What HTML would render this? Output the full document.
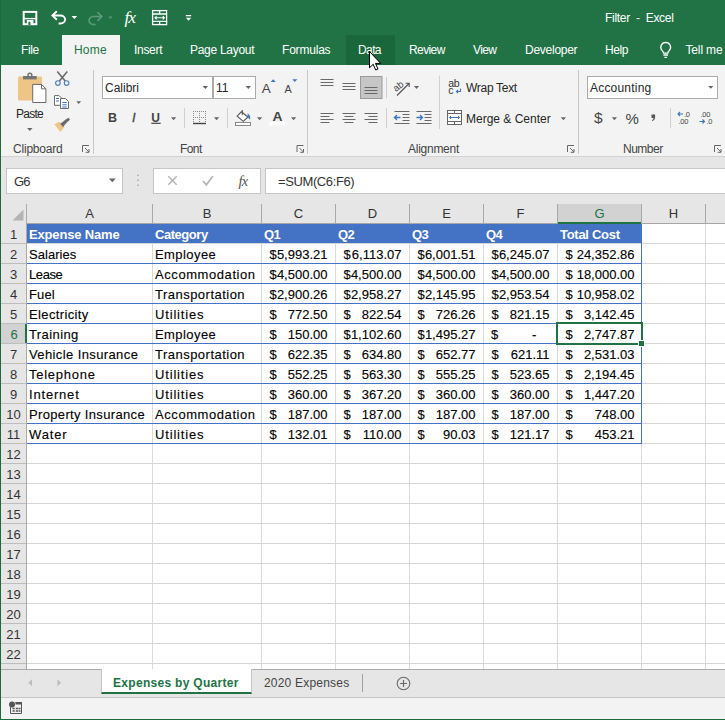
<!DOCTYPE html>
<html lang="en">
<head>
<meta charset="utf-8">
<title>Filter - Excel</title>
<style>
*{box-sizing:border-box;margin:0;padding:0}
html,body{width:725px;height:720px;overflow:hidden;background:#e6e6e6;font-family:"Liberation Sans",sans-serif;font-size:12px;color:#262626}
#app{position:absolute;left:0;top:0;width:725px;height:720px;overflow:hidden;background:#e6e6e6}
.abs{position:absolute}
#titlebar{position:absolute;left:0;top:0;width:725px;height:65px;background:#217346}
#title{position:absolute;left:605px;top:11px;color:#fff;font-size:12px;white-space:pre}
.tab{position:absolute;top:43px;color:#fff;font-size:12px;white-space:nowrap}
#hometab{position:absolute;left:62px;top:35px;width:58px;height:31px;background:#f3f3f3}
#datahover{position:absolute;left:346px;top:35px;width:49px;height:30px;background:#19673a}
#ribbon{position:absolute;left:0;top:65px;width:725px;height:92px;background:#f3f3f3;border-bottom:1px solid #d2d2d2}
.sep{position:absolute;top:5px;width:1px;height:84px;background:#c8c8c8}
.glabel{position:absolute;top:77px;font-size:12px;color:#444;white-space:nowrap}
.rt{position:absolute;font-size:12px;color:#262626;white-space:nowrap}
.combo{position:absolute;top:11px;height:23px;background:#fff;border:1px solid #ababab;font-size:12px;line-height:20px;padding:1px 0 0 2px;white-space:nowrap}
.dd{position:absolute;width:0;height:0;border-left:3px solid transparent;border-right:3px solid transparent;border-top:3px solid #666}
svg{position:absolute;overflow:visible}
#leftedge{position:absolute;left:0;top:0;width:1px;height:720px;background:#1a6b3c}
#fbar{position:absolute;left:0;top:158px;width:725px;height:46px;background:#e6e6e6}
#namebox{position:absolute;left:6px;top:168px;width:117px;height:26px;background:#fff;border:1px solid #c6c6c6;font-size:13px;line-height:26px;padding-left:7px;color:#333;letter-spacing:-.8px}
#fxbox{position:absolute;left:153px;top:168px;width:108px;height:26px;background:#fff;border:1px solid #c6c6c6}
#formula{position:absolute;left:265px;top:168px;width:470px;height:26px;background:#fff;border:1px solid #c6c6c6;font-size:13px;line-height:26px;padding-left:12px;color:#333}
#grid{position:absolute;left:0;top:0;width:725px;height:669px;overflow:hidden;pointer-events:none}
#gridbg{position:absolute;left:1px;top:204px;width:724px;height:465px;background:#fff}
#hdrbg{position:absolute;left:1px;top:204px;width:724px;height:20px;background:#e6e6e6;border-bottom:1px solid #a6a6a6}
#rhbg{position:absolute;left:1px;top:204px;width:26px;height:465px;background:#e6e6e6;border-right:1px solid #aaa}
.ch{position:absolute;top:204px;height:19px;line-height:20px;text-align:center;font-size:13px;color:#333;border-right:0}
.ch.sel{background:#d2d2d2;color:#217346;border-bottom:2px solid #217346;height:20px}
.rh{position:absolute;left:1px;width:25px;height:19px;line-height:21px;text-align:center;font-size:13px;color:#333}
.rh.sel{background:#d2d2d2;color:#217346;border-right:2px solid #217346;width:26px;padding-left:2px}
.vl{position:absolute;top:224px;width:1px;height:445px;background:#d9d9d9}
.hl{position:absolute;left:27px;width:698px;height:1px;background:#d6d6d6}
.rl{position:absolute;left:1px;width:25px;height:1px;background:#bdbdbd}
.hs{position:absolute;top:204px;width:1px;height:19px;background:#a8a8a8}
.thead{position:absolute;background:#4472c4}
.th{position:absolute;height:19px;line-height:22px;font-size:13px;font-weight:bold;color:#fff;white-space:nowrap;letter-spacing:.2px}
.tc{position:absolute;height:19px;line-height:22px;font-size:13px;color:#000;white-space:nowrap;-webkit-text-stroke:.12px #000}
.tc.num{text-align:right}
.bl{position:absolute;left:27px;width:615px;height:1px;background:#4472c4}
.bv{position:absolute;width:1px;background:#4472c4}
#selbox{position:absolute;left:556px;top:322px;width:87px;height:23px;border:2px solid #217346}
#selh{position:absolute;left:638px;top:340px;width:7px;height:7px;background:#217346;border:1px solid #fff}
#tabs{position:absolute;left:0;top:669px;width:725px;height:28px;background:#e6e6e6;border-top:1px solid #ababab}
#status{position:absolute;left:0;top:697px;width:725px;height:23px;background:#f3f3f3;border-top:1px solid #c6c6c6}
#botedge{position:absolute;left:0;top:719px;width:725px;height:1px;background:#1a6b3c}
</style>
</head>
<body>
<div id="app">
<div id="titlebar">
  <div id="title" style="letter-spacing:-.3px">Filter  -  Excel</div>
  <div id="datahover"></div>
  <div id="hometab"></div>
  <div class="tab" style="left:21px;letter-spacing:-.4px">File</div>
  <div class="tab" style="left:74px;color:#217346;letter-spacing:.2px">Home</div>
  <div class="tab" style="left:134px;letter-spacing:-.3px">Insert</div>
  <div class="tab" style="left:190px;letter-spacing:-.28px">Page Layout</div>
  <div class="tab" style="left:282px;letter-spacing:-.2px">Formulas</div>
  <div class="tab" style="left:358px;letter-spacing:-.6px">Data</div>
  <div class="tab" style="left:409px;letter-spacing:-.6px">Review</div>
  <div class="tab" style="left:473px;letter-spacing:-.6px">View</div>
  <div class="tab" style="left:525px;letter-spacing:-.26px">Developer</div>
  <div class="tab" style="left:605px;letter-spacing:-.4px">Help</div>
  <div class="tab" style="left:685.500px;letter-spacing:-.15px">Tell me</div>
</div>
<div id="ribbon">
  <div class="sep" style="left:93px"></div>
  <div class="sep" style="left:307px"></div>
  <div class="sep" style="left:578px"></div>
  <div class="rt" style="left:16px;top:42px;letter-spacing:-.75px">Paste</div>
  <div class="glabel" style="left:13px;letter-spacing:-.2px">Clipboard</div>
  <div class="glabel" style="left:180px;letter-spacing:-.6px">Font</div>
  <div class="glabel" style="left:408px;letter-spacing:-.26px">Alignment</div>
  <div class="glabel" style="left:623px;letter-spacing:-.5px">Number</div>
  <div class="combo" style="left:102px;width:111px">Calibri</div>
  <div class="combo" style="left:213px;width:43px">11</div>
  <div class="combo" style="left:587px;width:131px;letter-spacing:.2px">Accounting</div>
  <div class="rt" style="left:466px;top:16px;letter-spacing:-.3px">Wrap Text</div>
  <div class="rt" style="left:466px;top:47px">Merge &amp; Center</div>
</div>
<div id="fbar"></div>
<div id="namebox">G6</div>
<div id="fxbox"></div>
<div id="formula" style="letter-spacing:-.39px">=SUM(C6:F6)</div>
<div id="gridbg"></div><div id="hdrbg"></div><div id="rhbg"></div>

<div id="grid">
<div class="ch" style="left:27px;width:125px">A</div>
<div class="ch" style="left:153px;width:108px">B</div>
<div class="ch" style="left:262px;width:73px">C</div>
<div class="ch" style="left:336px;width:73px">D</div>
<div class="ch" style="left:410px;width:73px">E</div>
<div class="ch" style="left:484px;width:73px">F</div>
<div class="ch sel" style="left:558px;width:83px">G</div>
<div class="ch" style="left:642px;width:63px">H</div>
<div class="ch" style="left:706px;width:63px"></div>
<div class="vl" style="left:152px"></div><div class="hs" style="left:152px"></div>
<div class="vl" style="left:261px"></div><div class="hs" style="left:261px"></div>
<div class="vl" style="left:335px"></div><div class="hs" style="left:335px"></div>
<div class="vl" style="left:409px"></div><div class="hs" style="left:409px"></div>
<div class="vl" style="left:483px"></div><div class="hs" style="left:483px"></div>
<div class="vl" style="left:557px"></div><div class="hs" style="left:557px"></div>
<div class="vl" style="left:641px"></div><div class="hs" style="left:641px"></div>
<div class="vl" style="left:705px"></div><div class="hs" style="left:705px"></div>
<div class="vl" style="left:769px"></div><div class="hs" style="left:769px"></div>
<div class="rh" style="top:224px">1</div>
<div class="hl" style="top:243px"></div><div class="rl" style="top:243px"></div>
<div class="rh" style="top:244px">2</div>
<div class="hl" style="top:263px"></div><div class="rl" style="top:263px"></div>
<div class="rh" style="top:264px">3</div>
<div class="hl" style="top:283px"></div><div class="rl" style="top:283px"></div>
<div class="rh" style="top:284px">4</div>
<div class="hl" style="top:303px"></div><div class="rl" style="top:303px"></div>
<div class="rh" style="top:304px">5</div>
<div class="hl" style="top:323px"></div><div class="rl" style="top:323px"></div>
<div class="rh sel" style="top:324px">6</div>
<div class="hl" style="top:343px"></div><div class="rl" style="top:343px"></div>
<div class="rh" style="top:344px">7</div>
<div class="hl" style="top:363px"></div><div class="rl" style="top:363px"></div>
<div class="rh" style="top:364px">8</div>
<div class="hl" style="top:383px"></div><div class="rl" style="top:383px"></div>
<div class="rh" style="top:384px">9</div>
<div class="hl" style="top:403px"></div><div class="rl" style="top:403px"></div>
<div class="rh" style="top:404px">10</div>
<div class="hl" style="top:423px"></div><div class="rl" style="top:423px"></div>
<div class="rh" style="top:424px">11</div>
<div class="hl" style="top:443px"></div><div class="rl" style="top:443px"></div>
<div class="rh" style="top:444px">12</div>
<div class="hl" style="top:463px"></div><div class="rl" style="top:463px"></div>
<div class="rh" style="top:464px">13</div>
<div class="hl" style="top:483px"></div><div class="rl" style="top:483px"></div>
<div class="rh" style="top:484px">14</div>
<div class="hl" style="top:503px"></div><div class="rl" style="top:503px"></div>
<div class="rh" style="top:504px">15</div>
<div class="hl" style="top:523px"></div><div class="rl" style="top:523px"></div>
<div class="rh" style="top:524px">16</div>
<div class="hl" style="top:543px"></div><div class="rl" style="top:543px"></div>
<div class="rh" style="top:544px">17</div>
<div class="hl" style="top:563px"></div><div class="rl" style="top:563px"></div>
<div class="rh" style="top:564px">18</div>
<div class="hl" style="top:583px"></div><div class="rl" style="top:583px"></div>
<div class="rh" style="top:584px">19</div>
<div class="hl" style="top:603px"></div><div class="rl" style="top:603px"></div>
<div class="rh" style="top:604px">20</div>
<div class="hl" style="top:623px"></div><div class="rl" style="top:623px"></div>
<div class="rh" style="top:624px">21</div>
<div class="hl" style="top:643px"></div><div class="rl" style="top:643px"></div>
<div class="rh" style="top:644px">22</div>
<div class="hl" style="top:663px"></div><div class="rl" style="top:663px"></div>
<div class="thead" style="left:27px;top:224px;width:615px;height:19px"></div>
<div class="th" style="left:29px;top:224px;letter-spacing:-0.16px">Expense Name</div>
<div class="th" style="left:155px;top:224px;letter-spacing:-0.46px">Category</div>
<div class="th" style="left:264px;top:224px;letter-spacing:-0.5px">Q1</div>
<div class="th" style="left:338px;top:224px;letter-spacing:-0.5px">Q2</div>
<div class="th" style="left:412px;top:224px;letter-spacing:-0.5px">Q3</div>
<div class="th" style="left:486px;top:224px;letter-spacing:-0.5px">Q4</div>
<div class="th" style="left:560px;top:224px;letter-spacing:-0.29px">Total Cost</div>
<div class="bl" style="top:263px"></div>
<div class="tc" style="left:29px;top:244px;letter-spacing:0.04px">Salaries</div>
<div class="tc" style="left:155px;top:244px;letter-spacing:0.43px">Employee</div>
<div class="tc" style="left:269.5px;top:244px">$</div><div class="tc num" style="left:262px;width:65.5px;top:244px">5,993.21</div>
<div class="tc" style="left:343.5px;top:244px">$</div><div class="tc num" style="left:336px;width:65.5px;top:244px">6,113.07</div>
<div class="tc" style="left:417.5px;top:244px">$</div><div class="tc num" style="left:410px;width:65.5px;top:244px">6,001.51</div>
<div class="tc" style="left:491.5px;top:244px">$</div><div class="tc num" style="left:484px;width:65.5px;top:244px">6,245.07</div>
<div class="tc" style="left:565.5px;top:244px">$</div><div class="tc num" style="left:558px;width:76.5px;top:244px">24,352.86</div>
<div class="bl" style="top:283px"></div>
<div class="tc" style="left:29px;top:264px;letter-spacing:-0.4px">Lease</div>
<div class="tc" style="left:155px;top:264px;letter-spacing:0.57px">Accommodation</div>
<div class="tc" style="left:269.5px;top:264px">$</div><div class="tc num" style="left:262px;width:65.5px;top:264px">4,500.00</div>
<div class="tc" style="left:343.5px;top:264px">$</div><div class="tc num" style="left:336px;width:65.5px;top:264px">4,500.00</div>
<div class="tc" style="left:417.5px;top:264px">$</div><div class="tc num" style="left:410px;width:65.5px;top:264px">4,500.00</div>
<div class="tc" style="left:491.5px;top:264px">$</div><div class="tc num" style="left:484px;width:65.5px;top:264px">4,500.00</div>
<div class="tc" style="left:565.5px;top:264px">$</div><div class="tc num" style="left:558px;width:76.5px;top:264px">18,000.00</div>
<div class="bl" style="top:303px"></div>
<div class="tc" style="left:29px;top:284px;letter-spacing:0.13px">Fuel</div>
<div class="tc" style="left:155px;top:284px;letter-spacing:0.48px">Transportation</div>
<div class="tc" style="left:269.5px;top:284px">$</div><div class="tc num" style="left:262px;width:65.5px;top:284px">2,900.26</div>
<div class="tc" style="left:343.5px;top:284px">$</div><div class="tc num" style="left:336px;width:65.5px;top:284px">2,958.27</div>
<div class="tc" style="left:417.5px;top:284px">$</div><div class="tc num" style="left:410px;width:65.5px;top:284px">2,145.95</div>
<div class="tc" style="left:491.5px;top:284px">$</div><div class="tc num" style="left:484px;width:65.5px;top:284px">2,953.54</div>
<div class="tc" style="left:565.5px;top:284px">$</div><div class="tc num" style="left:558px;width:76.5px;top:284px">10,958.02</div>
<div class="bl" style="top:323px"></div>
<div class="tc" style="left:29px;top:304px;letter-spacing:0.37px">Electricity</div>
<div class="tc" style="left:155px;top:304px;letter-spacing:0.83px">Utilities</div>
<div class="tc" style="left:269.5px;top:304px">$</div><div class="tc num" style="left:262px;width:65.5px;top:304px">772.50</div>
<div class="tc" style="left:343.5px;top:304px">$</div><div class="tc num" style="left:336px;width:65.5px;top:304px">822.54</div>
<div class="tc" style="left:417.5px;top:304px">$</div><div class="tc num" style="left:410px;width:65.5px;top:304px">726.26</div>
<div class="tc" style="left:491.5px;top:304px">$</div><div class="tc num" style="left:484px;width:65.5px;top:304px">821.15</div>
<div class="tc" style="left:565.5px;top:304px">$</div><div class="tc num" style="left:558px;width:76.5px;top:304px">3,142.45</div>
<div class="bl" style="top:343px"></div>
<div class="tc" style="left:29px;top:324px;letter-spacing:0.41px">Training</div>
<div class="tc" style="left:155px;top:324px;letter-spacing:0.43px">Employee</div>
<div class="tc" style="left:269.5px;top:324px">$</div><div class="tc num" style="left:262px;width:65.5px;top:324px">150.00</div>
<div class="tc" style="left:343.5px;top:324px">$</div><div class="tc num" style="left:336px;width:65.5px;top:324px">1,102.60</div>
<div class="tc" style="left:417.5px;top:324px">$</div><div class="tc num" style="left:410px;width:65.5px;top:324px">1,495.27</div>
<div class="tc" style="left:491px;top:324px">$</div><div class="tc" style="left:532px;top:324px">-</div>
<div class="tc" style="left:565.5px;top:324px">$</div><div class="tc num" style="left:558px;width:76.5px;top:324px">2,747.87</div>
<div class="bl" style="top:363px"></div>
<div class="tc" style="left:29px;top:344px;letter-spacing:0.39px">Vehicle Insurance</div>
<div class="tc" style="left:155px;top:344px;letter-spacing:0.48px">Transportation</div>
<div class="tc" style="left:269.5px;top:344px">$</div><div class="tc num" style="left:262px;width:65.5px;top:344px">622.35</div>
<div class="tc" style="left:343.5px;top:344px">$</div><div class="tc num" style="left:336px;width:65.5px;top:344px">634.80</div>
<div class="tc" style="left:417.5px;top:344px">$</div><div class="tc num" style="left:410px;width:65.5px;top:344px">652.77</div>
<div class="tc" style="left:491.5px;top:344px">$</div><div class="tc num" style="left:484px;width:65.5px;top:344px">621.11</div>
<div class="tc" style="left:565.5px;top:344px">$</div><div class="tc num" style="left:558px;width:76.5px;top:344px">2,531.03</div>
<div class="bl" style="top:383px"></div>
<div class="tc" style="left:29px;top:364px;letter-spacing:0.75px">Telephone</div>
<div class="tc" style="left:155px;top:364px;letter-spacing:0.83px">Utilities</div>
<div class="tc" style="left:269.5px;top:364px">$</div><div class="tc num" style="left:262px;width:65.5px;top:364px">552.25</div>
<div class="tc" style="left:343.5px;top:364px">$</div><div class="tc num" style="left:336px;width:65.5px;top:364px">563.30</div>
<div class="tc" style="left:417.5px;top:364px">$</div><div class="tc num" style="left:410px;width:65.5px;top:364px">555.25</div>
<div class="tc" style="left:491.5px;top:364px">$</div><div class="tc num" style="left:484px;width:65.5px;top:364px">523.65</div>
<div class="tc" style="left:565.5px;top:364px">$</div><div class="tc num" style="left:558px;width:76.5px;top:364px">2,194.45</div>
<div class="bl" style="top:403px"></div>
<div class="tc" style="left:29px;top:384px;letter-spacing:0.81px">Internet</div>
<div class="tc" style="left:155px;top:384px;letter-spacing:0.83px">Utilities</div>
<div class="tc" style="left:269.5px;top:384px">$</div><div class="tc num" style="left:262px;width:65.5px;top:384px">360.00</div>
<div class="tc" style="left:343.5px;top:384px">$</div><div class="tc num" style="left:336px;width:65.5px;top:384px">367.20</div>
<div class="tc" style="left:417.5px;top:384px">$</div><div class="tc num" style="left:410px;width:65.5px;top:384px">360.00</div>
<div class="tc" style="left:491.5px;top:384px">$</div><div class="tc num" style="left:484px;width:65.5px;top:384px">360.00</div>
<div class="tc" style="left:565.5px;top:384px">$</div><div class="tc num" style="left:558px;width:76.5px;top:384px">1,447.20</div>
<div class="bl" style="top:423px"></div>
<div class="tc" style="left:29px;top:404px;letter-spacing:0.34px">Property Insurance</div>
<div class="tc" style="left:155px;top:404px;letter-spacing:0.57px">Accommodation</div>
<div class="tc" style="left:269.5px;top:404px">$</div><div class="tc num" style="left:262px;width:65.5px;top:404px">187.00</div>
<div class="tc" style="left:343.5px;top:404px">$</div><div class="tc num" style="left:336px;width:65.5px;top:404px">187.00</div>
<div class="tc" style="left:417.5px;top:404px">$</div><div class="tc num" style="left:410px;width:65.5px;top:404px">187.00</div>
<div class="tc" style="left:491.5px;top:404px">$</div><div class="tc num" style="left:484px;width:65.5px;top:404px">187.00</div>
<div class="tc" style="left:565.5px;top:404px">$</div><div class="tc num" style="left:558px;width:76.5px;top:404px">748.00</div>
<div class="bl" style="top:443px"></div>
<div class="tc" style="left:29px;top:424px;letter-spacing:0.85px">Water</div>
<div class="tc" style="left:155px;top:424px;letter-spacing:0.83px">Utilities</div>
<div class="tc" style="left:269.5px;top:424px">$</div><div class="tc num" style="left:262px;width:65.5px;top:424px">132.01</div>
<div class="tc" style="left:343.5px;top:424px">$</div><div class="tc num" style="left:336px;width:65.5px;top:424px">110.00</div>
<div class="tc" style="left:417.5px;top:424px">$</div><div class="tc num" style="left:410px;width:65.5px;top:424px">90.03</div>
<div class="tc" style="left:491.5px;top:424px">$</div><div class="tc num" style="left:484px;width:65.5px;top:424px">121.17</div>
<div class="tc" style="left:565.5px;top:424px">$</div><div class="tc num" style="left:558px;width:76.5px;top:424px">453.21</div>
<div class="bv" style="left:641px;top:224px;height:220px"></div>
<div id="selbox"></div><div id="selh"></div>
</div>
<div id="tabs">
  <div class="abs" style="left:101px;top:-1px;width:151px;height:25px;background:#fff;border-bottom:2px solid #217346;border-left:1px solid #c6c6c6;border-right:1px solid #c6c6c6"></div>
  <div class="abs" style="left:113px;top:6px;font-size:12px;font-weight:bold;color:#217346;white-space:nowrap;letter-spacing:.3px">Expenses by Quarter</div>
  <div class="abs" style="left:264px;top:6px;font-size:12px;color:#444;white-space:nowrap;letter-spacing:.2px">2020 Expenses</div>
  <div class="abs" style="left:362px;top:4px;width:1px;height:18px;background:#a0a0a0"></div>
  <svg width="725" height="28" viewBox="0 0 725 28" style="left:0;top:0">
    <path d="M32 9.300v7l-3.700-3.500zM57.400 9.300v7l3.700-3.500z" fill="#bdbdbd"/>
    <circle cx="403.500" cy="13.500" r="6.300" fill="none" stroke="#6a6a6a" stroke-width="1.100"/>
    <path d="M400 13.500h7M403.500 10v7" stroke="#6a6a6a" stroke-width="1.200"/>
  </svg>
</div>
<div id="status">
  <svg width="40" height="22" viewBox="0 0 40 22" style="left:0;top:0">
    <path d="M10.500 9v6.500h11v-11h-6" fill="none" stroke="#555" stroke-width="1"/>
    <rect x="15.500" y="4" width="6.500" height="2.500" fill="#555"/>
    <circle cx="12" cy="6.500" r="3" fill="#555"/>
    <path d="M12.500 10.500h2.200M15.800 10.500h2.200M18.500 10.500h2M12.500 13h2.200M15.800 13h2.200M18.500 13h2" stroke="#555" stroke-width="1.500"/>
  </svg>
</div>
<svg id="ico" width="725" height="200" viewBox="0 0 725 200" style="left:0;top:0">
<!-- QAT -->
<g fill="none" stroke="#fff" stroke-width="2">
  <rect x="23.700" y="11.900" width="12.600" height="12.300"/>
  <path d="M23.5 18.6H36.5" stroke-width="1.4"/>
</g>
<rect x="26.8" y="20" width="6.6" height="5" fill="#fff"/>
<rect x="28.4" y="21.8" width="2" height="3.2" fill="#217346"/>
<path d="M56.8 11.2 52.4 15.5 56.8 19.8 M52.6 15.5H60.5a4.6 4 0 0 1 0 8H58.6" fill="none" stroke="#fff" stroke-width="1.9" stroke-linejoin="miter"/>
<path d="M71.6 16h5.6l-2.8 3z" fill="#fff"/>
<path d="M97.4 12.2 101.8 16.5 97.4 20.8 M101.6 16.5H93.7a4.6 4 0 0 0 0 8H95.6" fill="none" stroke="#5b9a78" stroke-width="1.700"/>
<path d="M108.2 16.6h4.4l-2.2 2.4z" fill="#5b9a78"/>
<text x="124.500" y="22.600" font-family="'Liberation Serif',serif" font-style="italic" font-size="17.500" fill="#fff" letter-spacing="-1">fx</text>
<g fill="none" stroke="#fff" stroke-width="1.3">
  <rect x="152.6" y="10.6" width="14" height="14"/>
  <path d="M152.6 14H166.6M152.6 21.4H166.6M159.6 10.6V14M159.6 21.4V24.6"/>
  <path d="M155 17.7H164.4M156.6 16.1 155 17.7 156.6 19.3M162.8 16.1 164.4 17.7 162.8 19.3" stroke-width="1.1"/>
</g>
<path d="M185.8 14.9h5.4v1.3h-5.4zM185.8 17.8h5.4l-2.7 3z" fill="#fff"/>
<!-- lightbulb -->
<path d="M665.700 42.300a4.900 4.900 0 0 1 3.500 8.300c-.9.9-1.400 1.600-1.400 2.600h-4.200c0-1-.5-1.700-1.400-2.600a4.900 4.900 0 0 1 3.500-8.300zM663.400 55h4.600M664.300 57.300h2.800" fill="none" stroke="#fff" stroke-width="1.300"/>
<!-- Clipboard group -->
<rect x="18" y="76.500" width="24" height="24" rx="1" fill="#edc687"/>
<rect x="23" y="76" width="13.700" height="3.400" fill="#757575"/>
<circle cx="29.900" cy="75.200" r="1.900" fill="none" stroke="#757575" stroke-width="1.500"/>
<path d="M32.700 84.400h8.800l4.400 4.400v13.700h-13.200z" fill="#fff" stroke="#6a6a6a" stroke-width="1"/>
<path d="M41.500 84.400v4.400h4.400" fill="none" stroke="#6a6a6a" stroke-width="1"/>
<path d="M27.100 128h5.400l-2.700 3z" fill="#666"/>
<!-- scissors -->
<path d="M57.300 71.600 65.200 81M67.300 71.600 59.400 81" stroke="#6a6a6a" stroke-width="1.600" fill="none"/>
<circle cx="57.900" cy="83.100" r="2.300" fill="none" stroke="#4d82b8" stroke-width="1.100"/>
<circle cx="66.600" cy="83.100" r="2.300" fill="none" stroke="#4d82b8" stroke-width="1.100"/>
<!-- copy -->
<path d="M54.500 95.600h4.500l2 2v7.700h-6.500z" fill="#fff" stroke="#6a6a6a"/>
<path d="M60.500 98.500h5l3 3v7h-8z" fill="#fff" stroke="#6a6a6a"/>
<path d="M56 98.500h3M56 101h3M62.300 102.500h4.500M62.300 104.800h4.500M62.300 107h4.500" stroke="#3b76c0" stroke-width="1"/>
<path d="M76.300 101.200h4.800l-2.400 2.700z" fill="#666"/>
<!-- format painter -->
<path d="M54.400 124.300 59.400 121.700 64.600 127 60.300 131.900z" fill="#edc687"/>
<path d="M60.200 123.800 63 121.800 65.600 119.600 68.600 117.800 70 119.800 67.300 122 65 124.600 63 127z" fill="#6a6a6a"/>
<!-- launchers -->
<g fill="none" stroke="#666" stroke-width="1" transform="translate(0 0)"><path d="M82.500 152V145.500H89"/><path d="M85 148 89 152M89 149V152.300H85.700"/></g>
<g fill="none" stroke="#666" stroke-width="1" transform="translate(214.5 0)"><path d="M82.500 152V145.500H89"/><path d="M85 148 89 152M89 149V152.300H85.700"/></g>
<g fill="none" stroke="#666" stroke-width="1" transform="translate(485 0)"><path d="M82.500 152V145.500H89"/><path d="M85 148 89 152M89 149V152.300H85.700"/></g>
<g fill="none" stroke="#666" stroke-width="1" transform="translate(632 0)"><path d="M82.500 152V145.500H89"/><path d="M85 148 89 152M89 149V152.300H85.700"/></g>
<!-- Font group -->
<path d="M202.600 85.900h5.400l-2.700 3zM245.600 85.900h5.400l-2.700 3z" fill="#666"/>
<text x="261.800" y="92.800" font-size="13.500" fill="#444">A</text>
<path d="M270.700 82h5l-2.500-2.800z" fill="#3b76c0"/>
<text x="284.600" y="92.800" font-size="10.800" fill="#444">A</text>
<path d="M292.300 79.300h5l-2.500 2.800z" fill="#3b76c0"/>
<text x="108" y="122.200" font-size="12.500" font-weight="bold" fill="#444">B</text>
<text x="132" y="122.300" font-size="13" font-style="italic" fill="#444" stroke="#444" stroke-width=".3">I</text>
<text x="151.300" y="121.600" font-size="12" font-weight="bold" fill="#444">U</text>
<path d="M151.300 123.300h9.400" stroke="#444" stroke-width="1.200"/>
<path d="M171 117.300h5.200l-2.600 2.900z" fill="#666"/>
<path d="M184.500 108v20M227.500 108v20" stroke="#d0d0d0"/>
<!-- borders -->
<g stroke="#8a8a8a" stroke-width="1" stroke-dasharray="1 1" fill="none">
  <path d="M193 111.500h13M193 117.500h13M193.500 111v13M199.500 111v13M205.500 111v13"/>
</g>
<path d="M193 123.500h13" stroke="#444" stroke-width="1.400"/>
<path d="M214 117.300h5.200l-2.600 2.900z" fill="#666"/>
<!-- fill -->
<path d="M241.300 111.800 248 117 243.200 121.300 237.200 116.200z" fill="#fff" stroke="#555" stroke-width="1.100"/>
<path d="M242.300 110v5" stroke="#555" stroke-width="1.100"/>
<path d="M247.600 113.200c2 1.300 3 3.500 2.600 6.200-1.400-.6-2.300-2-2.600-3.500z" fill="#3b76c0"/>
<rect x="235.500" y="122.400" width="15" height="3" fill="#fff" stroke="#777" stroke-width=".9"/>
<path d="M257 117.300h5.200l-2.600 2.900z" fill="#666"/>
<!-- font color -->
<text x="272.600" y="121.200" font-size="12.500" font-weight="bold" fill="#444" textLength="10" lengthAdjust="spacingAndGlyphs">A</text>
<rect x="269.200" y="122" width="15.600" height="3.600" fill="#fff"/>
<path d="M291 117.300h5.200l-2.600 2.900z" fill="#666"/>
<!-- Alignment -->
<g stroke="#686868" stroke-width="1" fill="none">
  <path d="M320.500 79.500h13M320.500 82.500h13M320.500 85.500h13"/>
  <path d="M342.500 83.500h13M342.500 86.500h13M342.500 89.500h13"/>
</g>
<rect x="360.500" y="76.500" width="21.500" height="22" fill="#c6c6c6" stroke="#9a9a9a"/>
<path d="M364.500 87.500h13M364.500 90.500h13M364.500 93.500h13" stroke="#686868" fill="none"/>
<path d="M386.500 77v21M386.500 108v20M439.500 75.500v53.500M670.500 108v20" stroke="#d0d0d0"/>
<!-- orientation -->
<text x="394" y="90" font-size="9.500" fill="#444" transform="rotate(-38 398 88)">ab</text>
<path d="M397 95.500 409 83.500M405.500 83.300h3.700v3.700" stroke="#555" fill="none" stroke-width="1.100"/>
<path d="M413.900 86h5.200l-2.600 2.900z" fill="#666"/>
<!-- wrap text icon -->
<text x="448.300" y="86.800" font-size="10.500" fill="#333" letter-spacing="-.3">ab</text>
<text x="448.300" y="94.300" font-size="10.500" fill="#333">c</text>
<path d="M460.500 88.500v3h-4M458 90 456.500 91.500 458 93" stroke="#3b76c0" fill="none" stroke-width="1.100"/>
<!-- align l/c/r -->
<g stroke="#686868" stroke-width="1" fill="none">
  <path d="M320.500 113.500h13M320.500 116.500h9M320.500 119.500h13M320.500 122.500h9"/>
  <path d="M342.500 113.500h13M344.500 116.500h9M342.500 119.500h13M344.500 122.500h9"/>
  <path d="M364.500 113.500h13M368.500 116.500h9M364.500 119.500h13M368.500 122.500h9"/>
  <path d="M394.500 111.500h15M402.500 114.500h7M402.500 117.500h7M402.500 120.500h7M394.500 123.500h15"/>
  <path d="M416.500 111.500h15M424.500 114.500h7M424.500 117.500h7M424.500 120.500h7M416.500 123.500h15"/>
</g>
<path d="M400.500 117.500h-6M397 115l-2.500 2.500 2.500 2.500" stroke="#3b76c0" fill="none" stroke-width="1.300"/>
<path d="M416.500 117.500h6M420 115l2.500 2.500-2.500 2.500" stroke="#3b76c0" fill="none" stroke-width="1.300"/>
<!-- merge icon -->
<g stroke="#666" fill="none">
  <rect x="447.500" y="110.500" width="14" height="14" fill="#fff"/>
  <path d="M447.500 113.500h14M447.500 121.500h14M454.500 110.500v3M454.500 121.500v3"/>
</g>
<path d="M449.500 117.500h10M451 116l-1.500 1.500 1.500 1.500M458 116l1.500 1.500-1.500 1.500" stroke="#3b76c0" fill="none" stroke-width="1"/>
<path d="M560.800 117.300h5.200l-2.600 2.900z" fill="#666"/>
<!-- Number -->
<path d="M708.200 85.900h5.200l-2.600 2.900z" fill="#666"/>
<text x="594" y="123.400" font-size="15.500" fill="#444">$</text>
<path d="M611.800 117.300h5.200l-2.600 2.900z" fill="#666"/>
<text x="625.500" y="123.500" font-size="15" fill="#444" letter-spacing="-.5">%</text>
<path d="M651.500 114.500h3.600v2.800c0 2-1.200 3.400-3 3.900v-1.300c.9-.3 1.400-1 1.400-2h-2z" fill="#555"/>
<!-- inc/dec decimals -->
<text x="684" y="116.700" font-size="7.500" fill="#444" letter-spacing="-.3">.0</text>
<text x="678.500" y="124.300" font-size="7.500" fill="#444" letter-spacing="-.3">.00</text>
<path d="M683 114h-5M680 112l-2 2 2 2" stroke="#3b76c0" fill="none" stroke-width="1.100"/>
<text x="700.500" y="116.700" font-size="7.500" fill="#444" letter-spacing="-.3">.00</text>
<text x="706.500" y="124.300" font-size="7.500" fill="#444" letter-spacing="-.3">.0</text>
<path d="M699.500 121.500h5M702.500 119.500l2 2-2 2" stroke="#3b76c0" fill="none" stroke-width="1.100"/>
<!-- formula bar -->
<path d="M108.800 178.400h7l-3.500 3.900z" fill="#6a6a6a"/>
<path d="M138 174.500v1.500M138 179.500v1.500M138 184.500v1.500" stroke="#aaa" stroke-width="1.500"/>
<path d="M168.300 176.300l8.400 8.400M176.700 176.300l-8.400 8.400" stroke="#b4b4b4" stroke-width="1.500" fill="none"/>
<path d="M203 181l3.300 3.800 6.500-8.600" stroke="#b4b4b4" stroke-width="1.700" fill="none"/>
<text x="238.500" y="185.500" font-family="'Liberation Serif',serif" font-style="italic" font-size="14.500" fill="#555" letter-spacing="-.8">fx</text>
<!-- select-all triangle -->
<path d="M23.500 209.500v11h-11z" fill="#b4b4b4"/>
<!-- cursor -->
<path d="M369.500 51.500v16.300l3.700-3.500 2.500 5.700 2.300-1-2.500-5.600h5.200z" fill="#fff" stroke="#000" stroke-width="1" stroke-linejoin="miter"/>
</svg>

<div id="leftedge"></div>
<div id="botedge"></div>
</div>
</body>
</html>
